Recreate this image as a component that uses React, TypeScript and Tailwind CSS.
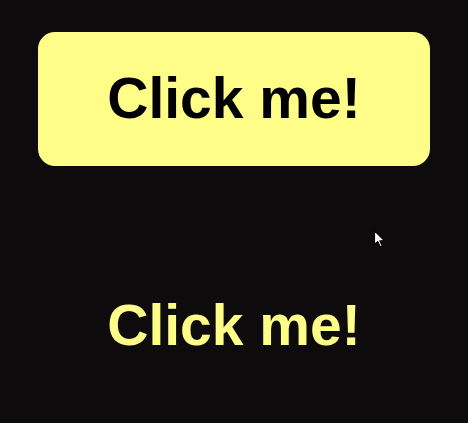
import React from "react";

const Cursor = () => (
  <svg
    className="absolute left-[374px] top-[230px] h-[19px] w-[13px]"
    viewBox="0 0 12 17"
  >
    <path
      d="M0.5 0.5 L0.5 13 L3.5 10.2 L5.8 15.5 L7.6 14.7 L5.4 9.6 L9.5 9.6 Z"
      fill="#ffffff"
      stroke="#000000"
      strokeWidth={1}
      strokeLinejoin="round"
    />
  </svg>
);

const App = () => {
  return (
    <div className="relative w-full h-[423px] bg-[#0e0b0d] font-['Liberation_Sans',Arial,sans-serif] font-bold overflow-hidden">
      {/* Button */}
      <div className="pt-[32px] px-[38px] flex justify-center">
        <button className="w-[392px] h-[134px] pb-[2px] rounded-[17px] bg-[#fdfd87] text-black text-[57px] leading-none flex items-center justify-center">
          Click me!
        </button>
      </div>

      {/* Label */}
      <div className="mt-[131px] flex justify-center text-[#fdfd87] text-[57px] leading-none">
        Click me!
      </div>

      <Cursor />
    </div>
  );
};

export default App;
